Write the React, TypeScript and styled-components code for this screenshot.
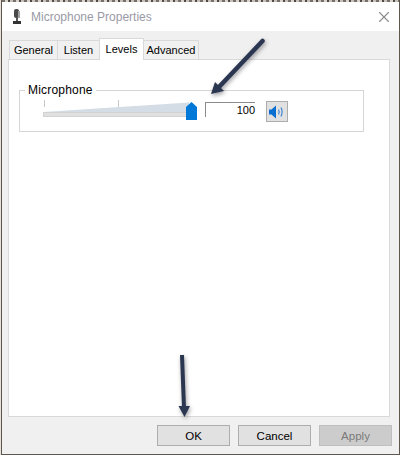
import styled, { createGlobalStyle } from 'styled-components';
import { X } from 'lucide-react';

const GlobalStyle = createGlobalStyle`
  html, body {
    margin: 0;
    padding: 0;
    background: #e6e2da;
  }
`;

const Screen = styled.div`
  position: relative;
  width: 400px;
  height: 455px;
  overflow: hidden;
  padding-left: 1px;
  box-sizing: border-box;
`;

const Dialog = styled.div`
  height: 100%;
  box-sizing: border-box;
  display: flex;
  flex-direction: column;
  background: #f0f0f0;
  border-left: 1px solid #5f564e;
  border-right: 1px solid #5f564e;
  border-bottom: 1px solid #5f564e;
  font-family: 'Liberation Sans', Arial, sans-serif;
  font-size: 11px;
  color: #000;
`;

// desktop showing through along the top edge of the window
const TopEdge = styled.div`
  height: 2px;
  flex: none;
  background: repeating-linear-gradient(90deg, #77706a 0 3px, #d8d4cc 3px 6px, #4f4a46 6px 8px, #c4c0b8 8px 11px);
`;

const TitleBar = styled.div`
  display: flex;
  align-items: center;
  height: 29px;
  flex: none;
  padding: 0 6px 0 11px;
  background: #fff;
`;

const TitleText = styled.span`
  margin-left: 10px;
  font-size: 12px;
  color: #9a9aa6;
`;

const CloseButton = styled.div`
  margin-left: auto;
  display: flex;
  color: #8c8c8c;
`;

const Body = styled.div`
  flex: 1;
  display: flex;
  flex-direction: column;
  padding: 7px 7px 0 6px;
`;

const Tabs = styled.div`
  display: flex;
  align-items: flex-end;
  height: 22px;
  padding-left: 1px;
  margin-bottom: -1px;
  position: relative;
  z-index: 1;
`;

const Tab = styled.div<{ $active?: boolean; $width: number }>`
  box-sizing: border-box;
  display: flex;
  align-items: center;
  justify-content: center;
  width: ${(p) => p.$width}px;
  height: ${(p) => (p.$active ? '22px' : '20px')};
  padding-bottom: ${(p) => (p.$active ? '2px' : '0')};
  margin-right: -1px;
  background: ${(p) => (p.$active ? '#fff' : '#f0f0f0')};
  border: 1px solid #d9d9d9;
  border-bottom: ${(p) => (p.$active ? 'none' : '1px solid #d9d9d9')};
  position: relative;
  z-index: ${(p) => (p.$active ? 1 : 0)};
`;

const Page = styled.div`
  box-sizing: border-box;
  height: 358px;
  flex: none;
  margin-right: 2px;
  background: #fff;
  border: 1px solid #d9d9d9;
  padding: 30px 10px 0 10px;
`;

const GroupBox = styled.div`
  box-sizing: border-box;
  width: 345px;
  height: 42px;
  padding: 8px 0 0 23px;
  border: 1px solid #d5d5d5;
  position: relative;
  display: flex;
  align-items: flex-start;
`;

const GroupTitle = styled.span`
  position: absolute;
  left: 5px;
  top: -8px;
  padding: 0 3px;
  background: #fff;
  font-size: 12px;
  letter-spacing: 0.2px;
`;

const Slider = styled.svg`
  display: block;
  flex: none;
`;

const LevelBox = styled.div`
  box-sizing: border-box;
  width: 50px;
  height: 15px;
  margin: 3px 0 0 8px;
  border-top: 1px solid #8a8a8a;
  border-left: 1px solid #8a8a8a;
  text-align: right;
  line-height: 14px;
`;

const MuteButton = styled.div`
  box-sizing: border-box;
  width: 22px;
  height: 21px;
  margin: 2px 0 0 11px;
  display: flex;
  align-items: center;
  justify-content: center;
  background: #e1e1e1;
  border: 1px solid #adadad;
`;

const Footer = styled.div`
  display: flex;
  justify-content: flex-end;
  gap: 8px;
  padding-top: 8px;
`;

const Button = styled.div<{ $disabled?: boolean }>`
  box-sizing: border-box;
  width: 73px;
  height: 21px;
  display: flex;
  align-items: center;
  justify-content: center;
  font-size: 11.5px;
  background: ${(p) => (p.$disabled ? '#cccccc' : '#e1e1e1')};
  border: 1px solid ${(p) => (p.$disabled ? '#bfbfbf' : '#adadad')};
  color: ${(p) => (p.$disabled ? '#7a7a7a' : '#000')};
`;

const ArrowOverlay = styled.svg`
  position: absolute;
  left: 0;
  top: 0;
  pointer-events: none;
  filter: drop-shadow(1px 2px 2px rgba(40, 40, 50, 0.45));
`;

export default function App() {
  return (
    <>
      <GlobalStyle />
      <Screen>
        <Dialog>
          <TopEdge />
          <TitleBar>
            <svg width="8" height="16" viewBox="0 0 8 16">
              <rect x="1" y="0" width="5" height="9" rx="2" fill="#4a4a4a" />
              <rect x="5" y="2" width="2" height="7" fill="#a0a0a0" />
              <rect x="3" y="9" width="2" height="4" fill="#555" />
              <rect x="0" y="12" width="8" height="3" fill="#333" />
            </svg>
            <TitleText>Microphone Properties</TitleText>
            <CloseButton>
              <X size={18} strokeWidth={1.5} />
            </CloseButton>
          </TitleBar>
          <Body>
            <Tabs>
              <Tab $width={49}>General</Tab>
              <Tab $width={43}>Listen</Tab>
              <Tab $width={45} $active>Levels</Tab>
              <Tab $width={56}>Advanced</Tab>
            </Tabs>
            <Page>
              <GroupBox>
                <GroupTitle>Microphone</GroupTitle>
                <Slider width="154" height="24" viewBox="0 0 154 24">
                  <path d="M1.500 1v7M75.500 1v7" stroke="#c8c8c8" />
                  <path d="M0 13 L146 3.500 V13 Z" fill="#d4dde5" />
                  <rect x="0.500" y="13.500" width="146" height="4" fill="#e0e0e0" stroke="#d2d2d2" />
                  <path d="M143 8 L148.500 3 L154 8 V21 H143 Z" fill="#0078d7" />
                </Slider>
                <LevelBox>100</LevelBox>
                <MuteButton>
                  <svg width="16" height="14" viewBox="0 0 16 14">
                    <path d="M0 4.500h2.500L7 .5v13L2.500 9.500H0z" fill="#0a6fd0" />
                    <path d="M9.500 4.500q1.500 2.500 0 5M12 2.500q2.200 4.500 0 9" fill="none" stroke="#3f86d2" strokeWidth="1.200" />
                  </svg>
                </MuteButton>
              </GroupBox>
            </Page>
            <Footer>
              <Button>OK</Button>
              <Button>Cancel</Button>
              <Button $disabled>Apply</Button>
            </Footer>
          </Body>
        </Dialog>
        <ArrowOverlay width="400" height="455" viewBox="0 0 400 455">
          <path d="M262.500 41 L219 87" stroke="#2b3650" strokeWidth="4.500" strokeLinecap="round" />
          <path d="M211 94 L215 82 L224 91 Z" fill="#2b3650" />
          <path d="M182 355 L184 408" stroke="#2b3650" strokeWidth="4" />
          <path d="M178.500 406 L190 406 L184.500 417 Z" fill="#2b3650" />
        </ArrowOverlay>
      </Screen>
    </>
  );
}
